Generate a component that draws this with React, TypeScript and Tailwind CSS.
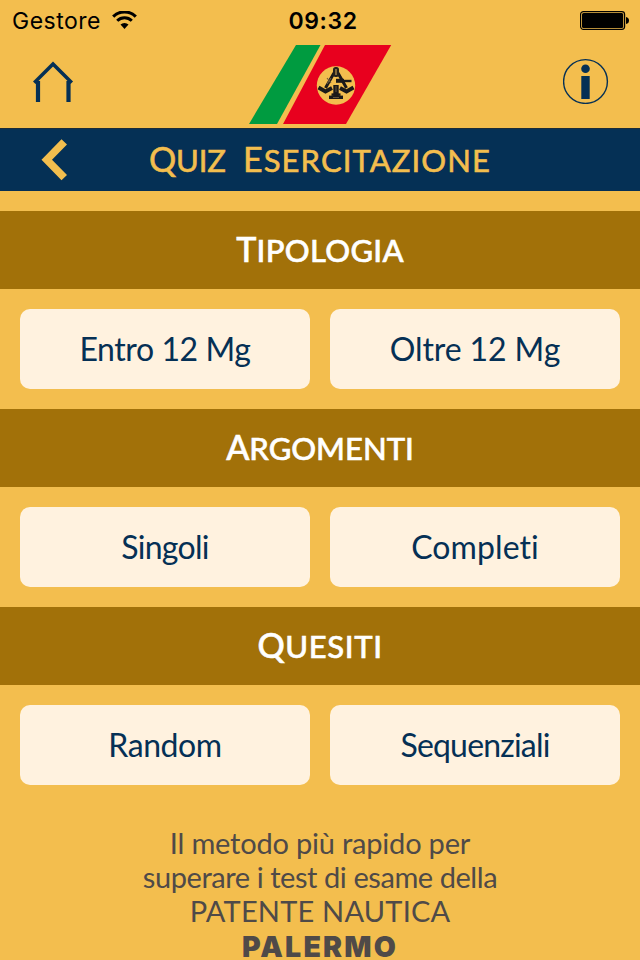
import type { ReactNode } from 'react';

type Label = { text: string; style: string };

const SECTIONS: { title: string; titleStyle: string; options: Label[] }[] = [
  {
    title: 'Tipologia',
    titleStyle: 'tracking-[0.3px]',
    options: [
      { text: 'Entro 12 Mg', style: 'tracking-[-0.4px]' },
      { text: 'Oltre 12 Mg', style: 'tracking-[-0.1px]' },
    ],
  },
  {
    title: 'Argomenti',
    titleStyle: 'tracking-[0px]',
    options: [
      { text: 'Singoli', style: 'tracking-[-0.7px]' },
      { text: 'Completi', style: 'tracking-[0.1px]' },
    ],
  },
  {
    title: 'Quesiti',
    titleStyle: 'tracking-[0.6px]',
    options: [
      { text: 'Random', style: 'tracking-[-0.4px]' },
      { text: 'Sequenziali', style: 'tracking-[-0.8px]' },
    ],
  },
];

function SmallCaps({ children }: { children: string }) {
  return (
    <span className="text-[31px] uppercase [-webkit-text-stroke:0.6px_currentColor]">
      <span className="text-[34px]">{children[0]}</span>
      {children.slice(1)}
    </span>
  );
}

function StatusBar() {
  return (
    <div className="grid h-10 shrink-0 grid-cols-3 items-center pl-3 pr-[11px] font-['Inter'] text-black">
      <div className="flex items-center gap-[11px]">
        <span className="pt-[3px] text-[23px] tracking-[0.5px]">Gestore</span>
        <svg width="25" height="18" viewBox="0 0 25 18">
          <path d="M1.2 5.6a16 16 0 0 1 22.6 0" fill="none" stroke="#000" strokeWidth="3.1" />
          <path d="M5.2 9.8a10.4 10.4 0 0 1 14.6 0" fill="none" stroke="#000" strokeWidth="3" />
          <path d="M8.5 13.6a5.8 5.8 0 0 1 8 0L12.5 18z" />
        </svg>
      </div>
      <span className="pl-[5px] pt-[3px] text-center text-[23px] font-semibold tracking-[0.6px]">09:32</span>
      <svg className="justify-self-end" width="49" height="19" viewBox="0 0 49 19">
        <rect x="0.6" y="0.6" width="44" height="17.8" rx="2.8" fill="none" stroke="#000" strokeWidth="1.2" />
        <rect x="2" y="2" width="41.2" height="15" rx="1.6" />
        <path d="M46 6q3 .5 3 3.500q0 3-3 3.500z" />
      </svg>
    </div>
  );
}

function Logo() {
  return (
    <svg width="144" height="80" viewBox="248 45 144 80">
      <path d="M296 45h24.500L277 124h-28z" fill="#009b40" />
      <path d="M325 45h66.200L346 124h-63z" fill="#e8001e" />
      <circle cx="336" cy="85.500" r="19.200" fill="#f3be4e" />
      <g fill="none" stroke="#1b1a19">
        <path d="M334 73l-8.500 15M338 73l8.500 15" strokeWidth="3" />
        <path d="M318.500 87.500l7 4 6.500-3.500M353.500 87.500l-7 4-6.500-3.500" strokeWidth="3.800" />
        <path d="M336 85v12" strokeWidth="5.400" />
        <path d="M329 97.300h14" strokeWidth="3.400" />
        <path d="M331.500 94.600h9" strokeWidth="2.500" />
        <path d="M336 80.800h8" strokeWidth="4" />
        <path d="M344 81h7.500" strokeWidth="2.400" />
        <path d="M327 78l4 5M331 78l-4 6" stroke="#6b5a3d" strokeWidth="1.100" />
      </g>
      <rect x="333" y="67" width="6" height="10" rx="2.500" fill="#24211c" />
      <path d="M336 69v6" stroke="#b5924d" strokeWidth="1.300" />
      <path d="M336 86v6M333 97.500h6" stroke="#766545" strokeWidth=".8" />
    </svg>
  );
}

function IconButton({ label, children }: { label: string; children: ReactNode }) {
  return (
    <button aria-label={label} className="flex items-center justify-center">
      {children}
    </button>
  );
}

function Header() {
  return (
    <header className="flex h-[88px] shrink-0 items-start justify-between pl-[33px] pr-[31px] pt-[5px] text-[#053055]">
      <div className="flex w-[120px] pt-4">
        <IconButton label="Home">
          <svg width="41" height="41" viewBox="33 61 41 41" fill="none" stroke="currentColor">
            <path d="M34.200 82.800L53 64l18.800 18.800" strokeWidth="3.600" />
            <path d="M38 81v21M68.500 81v21" strokeWidth="4.200" />
          </svg>
        </IconButton>
      </div>
      <Logo />
      <div className="flex w-[122px] justify-end pt-[13px]">
        <IconButton label="Info">
          <svg width="46" height="46" viewBox="0 0 46 46" fill="currentColor">
            <circle cx="22.500" cy="23.500" r="21.900" fill="none" stroke="currentColor" strokeWidth="1.400" />
            <circle cx="22.500" cy="10.800" r="4.300" />
            <path d="M18.300 18h8.400v23h-8.400z" />
          </svg>
        </IconButton>
      </div>
    </header>
  );
}

function App() {
  return (
    <main className="flex h-[960px] w-[640px] flex-col overflow-hidden bg-[#f3be4e] font-['Lato',sans-serif] [font-variant-ligatures:none]">
      <StatusBar />
      <Header />
      <div className="grid h-[63px] shrink-0 grid-cols-[80px_1fr_80px] items-start border-t border-[#1b2c38] bg-[#053055] text-[#f3be4e]">
        <button aria-label="Indietro" className="pl-[41px] pt-[10px]">
          <svg width="27" height="42" viewBox="41 139 27 42" fill="currentColor">
            <path d="M41.500 159.800L61.500 139.300l5.500 5.300-15 15.200 15 15.200-5.500 5.300z" />
          </svg>
        </button>
        <h1 className="flex justify-center gap-[17px] whitespace-nowrap leading-[60px]">
          <span className="tracking-[-0.1px]">
            <SmallCaps>Quiz</SmallCaps>
          </span>
          <span className="tracking-[1.1px]">
            <SmallCaps>Esercitazione</SmallCaps>
          </span>
        </h1>
      </div>
      {SECTIONS.map(section => (
        <section key={section.title} className="shrink-0 pt-5">
          <h2 className={`h-[78px] bg-[#a27109] text-center font-medium leading-[75px] text-white ${section.titleStyle}`}>
            <SmallCaps>{section.title}</SmallCaps>
          </h2>
          <div className="grid grid-cols-2 gap-5 px-5 pt-5">
            {section.options.map(option => (
              <button
                key={option.text}
                className={`h-20 rounded-[10px] bg-[#fff2df] text-[32px] text-[#053055] ${option.style}`}
              >
                {option.text}
              </button>
            ))}
          </div>
        </section>
      ))}
      <footer className="flex shrink-0 flex-col items-center whitespace-nowrap pt-[41px] text-[29px] leading-[34px] text-[#4f4a48]">
        <span className="tracking-[-0.2px]">Il metodo più rapido per</span>
        <span className="tracking-[-0.43px]">superare i test di esame della</span>
        <span className="tracking-[0.2px]">PATENTE NAUTICA</span>
        <strong className="pt-1.5 font-['Inter'] text-[28.5px] font-black leading-[26px] tracking-[2.2px]">PALERMO</strong>
      </footer>
    </main>
  );
}

export default App;
